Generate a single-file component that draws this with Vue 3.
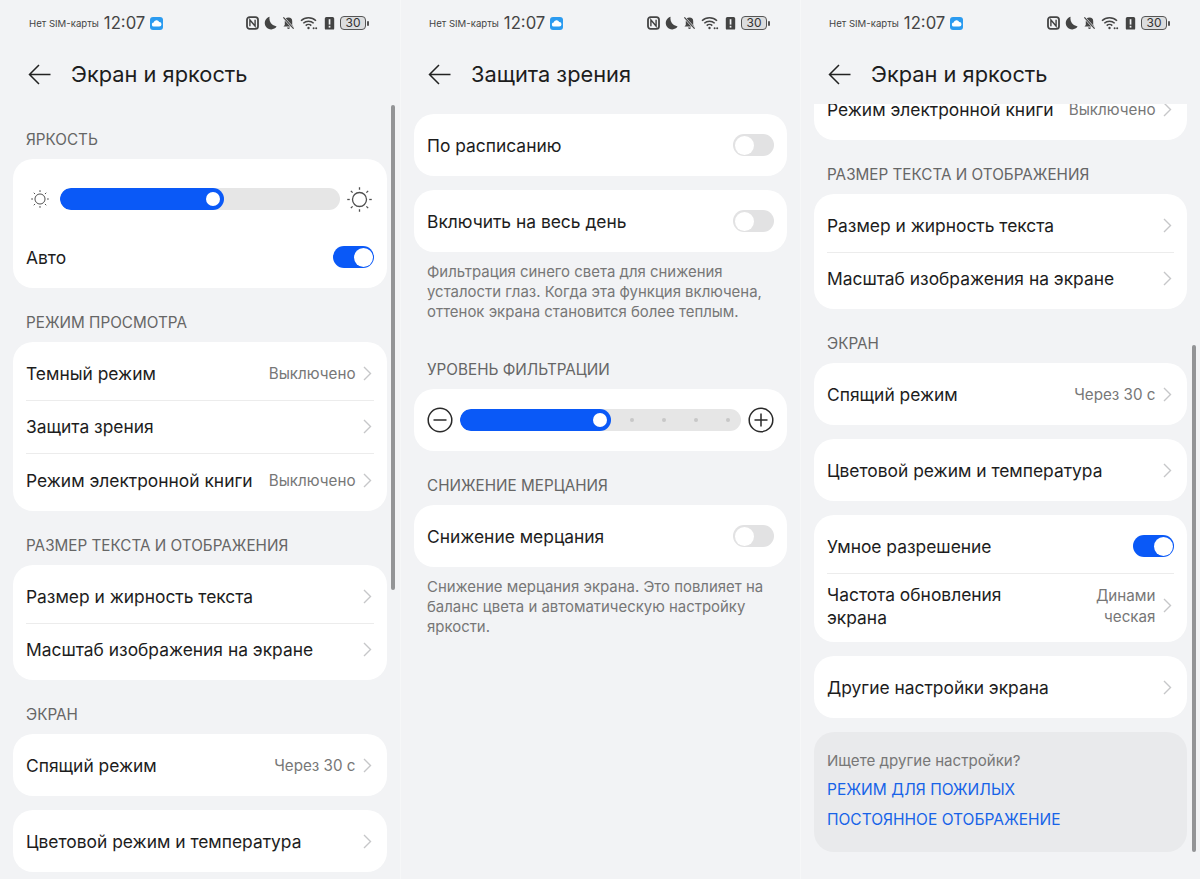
<script setup>
import { h } from 'vue'

const screens = [
  {
    title: 'Экран и яркость',
    scrollbar: { top: 105, height: 485, left: 391 },
    blocks: [
      { label: 'ЯРКОСТЬ' },
      { brightness: true, rows: [{ text: 'Авто', toggle: true, on: true }] },
      { label: 'РЕЖИМ ПРОСМОТРА' },
      { rows: [
        { text: 'Темный режим', value: 'Выключено', chevron: true },
        { text: 'Защита зрения', chevron: true },
        { text: 'Режим электронной книги', value: 'Выключено', chevron: true },
      ] },
      { label: 'РАЗМЕР ТЕКСТА И ОТОБРАЖЕНИЯ' },
      { rows: [
        { text: 'Размер и жирность текста', chevron: true },
        { text: 'Масштаб изображения на экране', chevron: true },
      ] },
      { label: 'ЭКРАН' },
      { rows: [{ text: 'Спящий режим', value: 'Через 30 с', chevron: true }] },
      { rows: [{ text: 'Цветовой режим и температура', chevron: true }] },
    ],
  },
  {
    title: 'Защита зрения',
    blocks: [
      { rows: [{ text: 'По расписанию', toggle: true, on: false }] },
      { rows: [{ text: 'Включить на весь день', toggle: true, on: false }] },
      { note: 'Фильтрация синего света для снижения усталости глаз. Когда эта функция включена, оттенок экрана становится более теплым.' },
      { label: 'УРОВЕНЬ ФИЛЬТРАЦИИ' },
      { filter: true },
      { label: 'СНИЖЕНИЕ МЕРЦАНИЯ' },
      { rows: [{ text: 'Снижение мерцания', toggle: true, on: false }] },
      { note: 'Снижение мерцания экрана. Это повлияет на баланс цвета и автоматическую настройку яркости.' },
    ],
  },
  {
    title: 'Экран и яркость',
    scrollbar: { top: 345, height: 507, left: 391 },
    scrolled: true,
    blocks: [
      { rows: [{ text: 'Режим электронной книги', value: 'Выключено', chevron: true }] },
      { label: 'РАЗМЕР ТЕКСТА И ОТОБРАЖЕНИЯ' },
      { rows: [
        { text: 'Размер и жирность текста', chevron: true },
        { text: 'Масштаб изображения на экране', chevron: true },
      ] },
      { label: 'ЭКРАН' },
      { rows: [{ text: 'Спящий режим', value: 'Через 30 с', chevron: true }] },
      { rows: [{ text: 'Цветовой режим и температура', chevron: true }] },
      { rows: [
        { text: 'Умное разрешение', toggle: true, on: true },
        { text: 'Частота обновления экрана', value: 'Динами ческая', chevron: true, tall: true },
      ] },
      { rows: [{ text: 'Другие настройки экрана', chevron: true }] },
      { more: ['РЕЖИМ ДЛЯ ПОЖИЛЫХ', 'ПОСТОЯННОЕ ОТОБРАЖЕНИЕ'] },
    ],
  },
]

const rays = [0, 45, 90, 135, 180, 225, 270, 315]
const dots = [0, 1, 2, 3]

const Sun = (props) => {
  const s = props.size
  const c = s / 2
  const r = s * 0.28
  const inner = s * 0.39
  const outer = s * 0.49
  return h('svg', { width: s, height: s, viewBox: `0 0 ${s} ${s}`, fill: 'none', stroke: '#4f4f4f', 'stroke-width': props.weight }, [
    h('circle', { cx: c, cy: c, r }),
    ...rays.map((a) => h('line', {
      x1: c + inner * Math.cos(a * Math.PI / 180),
      y1: c + inner * Math.sin(a * Math.PI / 180),
      x2: c + outer * Math.cos(a * Math.PI / 180),
      y2: c + outer * Math.sin(a * Math.PI / 180),
    })),
  ])
}
Sun.props = ['size', 'weight']
</script>

<template>
  <div class="page">
    <section v-for="(screen, si) in screens" :key="si" class="phone">
      <div class="status">
        <span class="carrier">Нет SIM-карты</span>
        <span class="clock">12:07</span>
        <svg class="cloud" width="13" height="13" viewBox="0 0 13 13">
          <rect width="13" height="13" rx="3" fill="#2b9bf0" />
          <path d="M4 9.6a2 2 0 0 1-.3-4 2.9 2.9 0 0 1 5.5-.6 2.3 2.3 0 0 1 0 4.6z" fill="#fff" />
        </svg>
        <span class="status-right">
          <svg width="13" height="14" viewBox="0 0 13 14" fill="none" stroke="#444">
            <rect x="1" y="1.2" width="11" height="11.6" rx="2.6" stroke-width="1.8" />
            <path d="M3.9 10.2V4l5.2 6V3.8" stroke-width="1.4" />
          </svg>
          <svg width="13" height="14" viewBox="0 0 13 14">
            <path d="M5.6 .8a6.4 6.4 0 1 0 7 9.6A8 8 0 0 1 5.6 .8z" fill="#444" />
          </svg>
          <svg width="13" height="14" viewBox="0 0 14 14">
            <path d="M7 1.2a4 4 0 0 1 4 4v4l1.4 1.6H1.6L3 9.2v-4a4 4 0 0 1 4-4zM5.4 11.8h3.2a1.6 1.6 0 0 1-3.2 0z" fill="#444" />
            <path d="M1.5 1l11 12" stroke="#f2f3f5" stroke-width="2.4" />
            <path d="M1.5 1l11 12" stroke="#444" stroke-width="1.3" />
          </svg>
          <svg width="18" height="14" viewBox="0 0 18 14" fill="none" stroke="#444" stroke-width="1.5">
            <path d="M1 4.8a11 11 0 0 1 15 0" />
            <path d="M3.3 7.2a7.6 7.6 0 0 1 10.4 0" />
            <path d="M5.7 9.6a4 4 0 0 1 5.6 0" />
            <circle cx="8.5" cy="12" r="1.2" fill="#444" stroke="none" />
            <circle cx="13.6" cy="12.3" r="1" fill="#444" stroke="none" />
            <circle cx="16.2" cy="12.3" r="1" fill="#444" stroke="none" />
          </svg>
          <svg width="11" height="14" viewBox="0 0 11 14">
            <path d="M2.4 1h6.2A1.6 1.6 0 0 1 10.2 2.6v9.8a1.2 1.2 0 0 1-1.2 1.2H2A1.2 1.2 0 0 1 .8 12.4V2.6A1.6 1.6 0 0 1 2.4 1z" fill="#444" />
            <rect x="4.7" y="3.2" width="1.7" height="5.4" fill="#f2f3f5" />
            <rect x="4.7" y="9.8" width="1.7" height="1.8" fill="#f2f3f5" />
          </svg>
          <span class="battery-wrap">
            <span class="battery"><span class="battery-num">30</span></span>
            <span class="battery-tip"></span>
          </span>
        </span>
      </div>

      <header class="head">
        <svg class="back" width="23" height="21" viewBox="0 0 23 21" fill="none" stroke="#222" stroke-width="1.5">
          <path d="M22.5 10.5H1.5M11 1 1.5 10.5 11 20" />
        </svg>
        <h1 class="title">{{ screen.title }}</h1>
      </header>

      <div class="scroller" :class="{ 'scroller-clip': screen.scrolled }">
        <div class="content" :class="{ scrolled: screen.scrolled, plain: !screen.scrollbar }">
          <template v-for="(block, bi) in screen.blocks" :key="bi">
            <div v-if="block.label" class="label">{{ block.label }}</div>

            <p v-else-if="block.note" class="note">{{ block.note }}</p>

            <div v-else-if="block.more" class="more">
              <div class="more-q">Ищете другие настройки?</div>
              <a v-for="link in block.more" :key="link" class="more-link">{{ link }}</a>
            </div>

            <div v-else-if="block.filter" class="card filter">
              <svg width="26" height="26" viewBox="0 0 26 26" fill="none" stroke="#2a2a2a" stroke-width="1.5">
                <circle cx="13" cy="13" r="11.8" />
                <path d="M6.5 13h13" />
              </svg>
              <div class="track">
                <div class="fill fill-filter"><span class="knob"></span></div>
                <div class="dots"><i v-for="d in dots" :key="d" class="dot"></i></div>
              </div>
              <svg width="26" height="26" viewBox="0 0 26 26" fill="none" stroke="#2a2a2a" stroke-width="1.5">
                <circle cx="13" cy="13" r="11.8" />
                <path d="M6.5 13h13M13 6.5v13" />
              </svg>
            </div>

            <div v-else class="card" :class="{ bright: block.brightness }">
              <div v-if="block.brightness" class="bright-row">
                <Sun class="sun-low" :size="18" :weight="1" />
                <div class="track"><div class="fill fill-bright"><span class="knob"></span></div></div>
                <Sun class="sun-high" :size="25" :weight="1.3" />
              </div>
              <div
                v-for="(row, ri) in block.rows"
                :key="ri"
                class="row"
                :class="{ tall: row.tall, single: block.rows.length === 1 && !block.brightness, multi: block.rows.length > 1, auto: block.brightness }"
              >
                <span class="row-text">{{ row.text }}</span>
                <span v-if="row.value" class="row-value">{{ row.value }}</span>
                <svg v-if="row.chevron" class="chev" width="9" height="15" viewBox="0 0 9 15" fill="none" stroke="#c6c7c9" stroke-width="1.4">
                  <path d="M1 1l6.5 6.5L1 14" />
                </svg>
                <span v-if="row.toggle" class="toggle" :class="{ on: row.on }"><span class="toggle-knob"></span></span>
              </div>
            </div>
          </template>
        </div>
      </div>

      <div
        v-if="screen.scrollbar"
        class="scrollbar"
        :style="{ top: screen.scrollbar.top + 'px', height: screen.scrollbar.height + 'px', left: screen.scrollbar.left + 'px' }"
      ></div>
    </section>
  </div>
</template>

<style>
html, body { margin: 0; background: #f2f3f5; }
</style>

<style scoped>
.page {
  display: flex;
  width: 1200px;
  height: 879px;
  overflow: hidden;
  background: #f2f3f5;
  font-family: "Inter", "Noto Sans", sans-serif;
}
.phone {
  position: relative;
  flex: 0 0 400px;
  box-sizing: border-box;
  height: 879px;
  background: #f2f3f5;
  display: flex;
  flex-direction: column;
  overflow: hidden;
}
.phone + .phone { border-left: 1px solid #f6f7f8; }
.status {
  display: flex;
  align-items: center;
  height: 26px;
  margin-top: 10px;
  padding: 0 31px 0 29px;
  color: #444;
}
.phone + .phone .status { padding: 0 30px 0 28px; }
.carrier { font-size: 9.6px; margin-right: 5px; }
.clock { font-size: 16.7px; margin-right: 5px; }
.status-right { margin-left: auto; display: flex; align-items: center; gap: 5.3px; }
.battery-wrap { display: flex; align-items: center; gap: 1px; }
.battery {
  width: 26px;
  height: 14px;
  border: 1px solid #555;
  border-radius: 4px;
  background: #dcdddf;
  display: flex;
  align-items: center;
  justify-content: center;
  box-sizing: border-box;
}
.battery-num { font-size: 12px; line-height: 12px; color: #333; }
.battery-tip { width: 2px; height: 5px; background: #555; border-radius: 1px; }
.head {
  display: flex;
  align-items: center;
  height: 40px;
  margin-top: 18px;
  padding-left: 28px;
}
.phone + .phone .head { padding-left: 27px; }
.back { flex: none; margin-right: 20px; }
.title { margin: 0; font-size: 21.8px; font-weight: 400; color: #1d1d1d; }
.scroller { flex: 1; overflow: hidden; margin-top: 6px; }
.scroller-clip { margin-top: 10px; }
.content { padding: 0 13px; }
.content.plain { padding-top: 14px; }
.content.scrolled { margin-top: -26px; }
.label {
  font-size: 15.25px;
  color: #666;
  line-height: 20px;
  padding: 0 13px;
  margin: 25px 0 9px;
}
.content > .label:first-child { margin-top: 30px; }
.card {
  background: #fff;
  border-radius: 20px;
  margin-bottom: 14px;
  padding: 0 13px;
}
.row { display: flex; align-items: center; font-size: 17.4px; color: #1d1d1d; box-sizing: border-box; }
.row.single { height: 62px; }
.row.multi { height: 53px; padding-bottom: 2px; border-top: 1px solid #ececec; }
.row.multi:first-child { border-top: 0; height: 58px; padding: 4px 0 0; }
.row.multi:last-child { height: 57px; padding-bottom: 5px; }
.row.multi:nth-child(3) { height: 58px; padding-bottom: 4px; }
.row.multi.tall { height: 69px; padding-bottom: 5px; }
.row.auto { height: 62px; margin-top: 15px; }
.row-text { flex: 0 1 auto; line-height: 23px; }
.row.tall .row-text { width: 200px; }
.row-value {
  margin-left: auto;
  font-size: 15.2px;
  color: #777;
  line-height: 21px;
  text-align: right;
}
.row.tall .row-value { width: 62px; }
.row .chev { flex: none; margin-left: 7px; margin-right: 2.5px; }
.row .chev:nth-child(2) { margin-left: auto; }
.toggle {
  margin-left: auto;
  width: 41px;
  height: 22px;
  border-radius: 11px;
  background: #e2e2e3;
  position: relative;
  flex: none;
}
.toggle.on { background: #0a59f7; }
.toggle-knob {
  position: absolute;
  top: 1.5px;
  left: 1.5px;
  width: 19px;
  height: 19px;
  border-radius: 50%;
  background: #fff;
}
.toggle.on .toggle-knob { left: 20.5px; }
.bright { padding-top: 28px; }
.bright-row { display: flex; align-items: center; height: 24px; }
.sun-low { margin: 0 11px 0 5px; flex: none; }
.sun-high { margin-left: 7px; flex: none; }
.track {
  position: relative;
  height: 22px;
  background: #e6e6e6;
  border-radius: 11px;
  overflow: hidden;
  flex: 1;
}
.bright-row .track { flex: none; width: 280px; }
.fill {
  position: relative;
  height: 100%;
  background: #0a59f7;
  border-radius: 11px;
}
.fill-bright { width: 164px; }
.fill-filter { width: 151px; }
.knob {
  position: absolute;
  right: 4px;
  top: 4px;
  width: 14px;
  height: 14px;
  border-radius: 50%;
  background: #fff;
}
.filter {
  display: flex;
  align-items: center;
  gap: 7px;
  height: 62px;
  padding: 0 13px;
}
.dots {
  position: absolute;
  top: 0;
  left: 170px;
  height: 100%;
  display: flex;
  align-items: center;
  gap: 28px;
}
.dot { width: 4px; height: 4px; border-radius: 50%; background: #c8c8c8; }
.note {
  margin: -4px 0 38px;
  padding: 0 13px;
  font-size: 14.95px;
  line-height: 20px;
  color: #777;
}
.more {
  background: #e9eaec;
  border-radius: 20px;
  padding: 16px 13px 18px;
  height: 120px;
  box-sizing: border-box;
}
.more-q { font-size: 15.1px; color: #777; line-height: 25px; margin-bottom: 2px; }
.more-link { display: block; font-size: 15.5px; color: #1763e8; line-height: 30px; }
.scrollbar {
  position: absolute;
  width: 4px;
  background: #939496;
  border-radius: 2px;
}
</style>
